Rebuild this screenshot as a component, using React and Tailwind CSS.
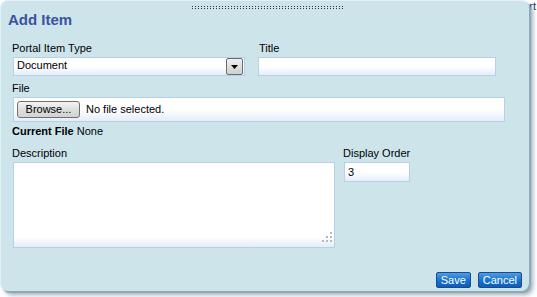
import React from "react";

const font = { fontFamily: '"Liberation Sans", Arial, sans-serif' };

const Grip = () => {
  const dots = [];
  for (let i = 0; i < 51; i++) {
    dots.push(<rect key={"a" + i} x={i * 3} y={0} width={1} height={1} />);
    dots.push(<rect key={"b" + i} x={i * 3} y={2} width={1} height={1} />);
  }
  return (
    <svg width="152" height="3" className="fill-[#2f363c]">
      {dots}
    </svg>
  );
};

const ResizeGrip = () => (
  <svg width="12" height="12" className="fill-[#b4b8bc]">
    <rect x="9" y="1" width="2" height="2" />
    <rect x="5" y="5" width="2" height="2" />
    <rect x="9" y="5" width="2" height="2" />
    <rect x="1" y="9" width="2" height="2" />
    <rect x="5" y="9" width="2" height="2" />
    <rect x="9" y="9" width="2" height="2" />
  </svg>
);

const Label = ({ children, className = "" }) => (
  <div className={"text-[11px] leading-[13px] text-black " + className}>{children}</div>
);

const fieldBg =
  "border border-[#b7d0ea] bg-[linear-gradient(to_bottom,#ffffff_50%,#e4edf9_100%)]";

const BlueButton = ({ children }) => (
  <button className="h-[16px] px-[4px] border border-[#1b4a86] rounded-[2px] bg-[linear-gradient(to_bottom,#4f9ce4_0%,#1a74cf_50%,#0c5eb8_100%)] text-[11px] leading-[13px] text-white">
    {children}
  </button>
);

export default function App() {
  return (
    <div className="relative w-[537px] h-[297px] bg-white overflow-hidden" style={font}>
      <div className="flex justify-end text-[11px] leading-[13px] text-[#1d2a78] pr-[1px]">
        Report
      </div>

      <div className="absolute top-0 left-0 w-[529px] h-[291px] rounded-[8px] bg-[#cce4ea] border-t border-l border-[#e2f0f3] shadow-[2px_2px_0_#8fa9b6,4px_4px_4px_rgba(80,110,130,0.55)] flex flex-col">
        <div className="flex justify-center pt-[5px] pl-[6px]">
          <Grip />
        </div>

        <div className="ml-[7px] mt-[2px] text-[15px] leading-[17px] font-bold text-[#3a52a0]">
          Add Item
        </div>

        <div className="flex flex-col pl-[11px] mt-[14px]">
          <div className="flex">
            <div className="flex flex-col w-[233px]">
              <Label>Portal Item Type</Label>
              <div className={"ml-[1px] mt-[2px] h-[19px] w-[232px] flex items-start " + fieldBg}>
                <span className="flex-1 pl-[3px] text-[11px] leading-[13px] pt-[1px]">Document</span>
                <div className="w-[17px] h-[17px] mr-[1px] border border-[#6b6b6b] rounded-[2px] bg-[linear-gradient(to_bottom,#f0f0f0,#cfcfcf)] flex items-center justify-center">
                  <svg width="7" height="4" viewBox="0 0 7 4" className="fill-black">
                    <polygon points="0,0 7,0 3.5,4" />
                  </svg>
                </div>
              </div>
            </div>
            <div className="flex flex-col ml-[13px]">
              <Label className="pl-[1px]">Title</Label>
              <div className={"mt-[2px] h-[19px] w-[238px] " + fieldBg}></div>
            </div>
          </div>

          <Label className="mt-[6px]">File</Label>
          <div className={"ml-[1px] mt-[2px] h-[25px] w-[492px] flex items-center gap-[6px] pl-[3px] " + fieldBg}>
            <button className="h-[17px] w-[63px] border border-[#707070] rounded-[3px] bg-[linear-gradient(to_bottom,#f4f4f4,#dedede_50%,#d2d2d2)] text-[11px] leading-[13px] text-black">
              Browse...
            </button>
            <span className="text-[11px] leading-[13px]">No file selected.</span>
          </div>

          <div className="mt-[3px] text-[11px] leading-[13px]">
            <span className="font-bold">Current File</span> None
          </div>

          <div className="flex mt-[9px]">
            <div className="flex flex-col w-[322px]">
              <Label>Description</Label>
              <div className={"ml-[1px] mt-[2px] h-[86px] w-[322px] flex items-end justify-end border border-[#b7d0ea] bg-[linear-gradient(to_bottom,#ffffff_88%,#e4edf9_100%)]"}>
                <div className="mr-[1px] mb-[4px]">
                  <ResizeGrip />
                </div>
              </div>
            </div>
            <div className="flex flex-col ml-[9px]">
              <Label>Display Order</Label>
              <div className={"ml-[1px] mt-[2px] h-[20px] w-[66px] pl-[3px] pt-[3px] text-[11px] leading-[13px] " + fieldBg}>
                3
              </div>
            </div>
          </div>
        </div>

        <div className="flex justify-end gap-[7px] pr-[7px] mt-[24px]">
          <BlueButton>Save</BlueButton>
          <BlueButton>Cancel</BlueButton>
        </div>
      </div>
    </div>
  );
}
